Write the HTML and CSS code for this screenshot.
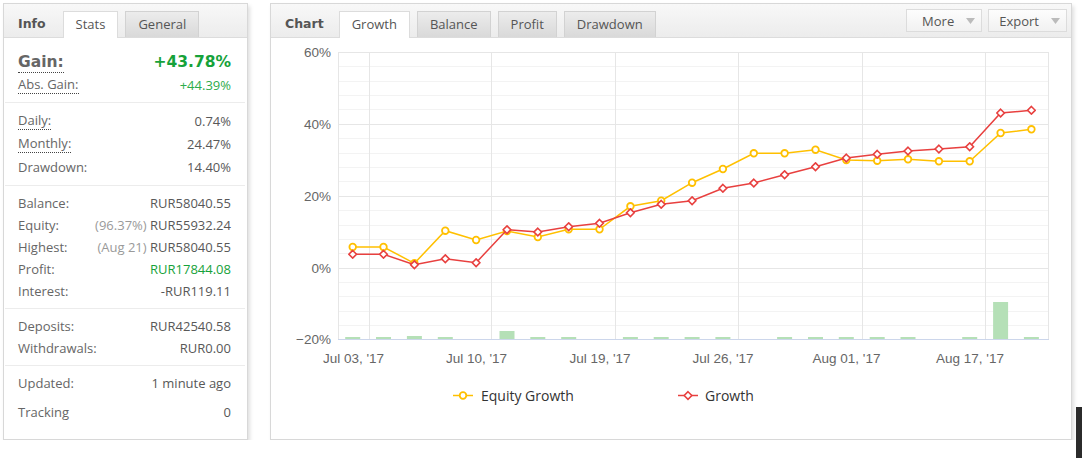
FILE: index.html
```html
<!DOCTYPE html>
<html lang="en">
<head>
  <meta charset="UTF-8">
  <title>Account stats</title>
  <link rel="stylesheet" href="styles.css">
</head>
<body>
  <div class="page">
    <!-- left: info / stats -->
    <section class="panel info">
      <div class="panel-head">
        <span class="head-title">Info</span>
        <span class="tab active">Stats</span>
        <span class="tab">General</span>
      </div>
      <div class="panel-body">
        <div class="group first">
          <div class="row gain"><span class="key dotted">Gain:</span><span class="val green">+43.78%</span></div>
          <div class="row"><span class="key dotted">Abs. Gain:</span><span class="val green-light">+44.39%</span></div>
        </div>
        <div class="group tall">
          <div class="row"><span class="key dotted">Daily:</span><span class="val">0.74%</span></div>
          <div class="row"><span class="key dotted">Monthly:</span><span class="val">24.47%</span></div>
          <div class="row"><span class="key">Drawdown:</span><span class="val">14.40%</span></div>
        </div>
        <div class="group">
          <div class="row"><span class="key">Balance:</span><span class="val">RUR58040.55</span></div>
          <div class="row"><span class="key">Equity:</span><span class="val"><span class="note">(96.37%)</span> RUR55932.24</span></div>
          <div class="row"><span class="key">Highest:</span><span class="val"><span class="note">(Aug 21)</span> RUR58040.55</span></div>
          <div class="row"><span class="key">Profit:</span><span class="val green">RUR17844.08</span></div>
          <div class="row"><span class="key">Interest:</span><span class="val">-RUR119.11</span></div>
        </div>
        <div class="group">
          <div class="row"><span class="key">Deposits:</span><span class="val">RUR42540.58</span></div>
          <div class="row"><span class="key">Withdrawals:</span><span class="val">RUR0.00</span></div>
        </div>
        <div class="group last">
          <div class="row"><span class="key">Updated:</span><span class="val">1 minute ago</span></div>
          <div class="row"><span class="key">Tracking</span><span class="val">0</span></div>
        </div>
      </div>
    </section>

    <!-- right: chart -->
    <section class="panel chart">
      <div class="panel-head">
        <span class="head-title">Chart</span>
        <span class="tab active">Growth</span>
        <span class="tab">Balance</span>
        <span class="tab">Profit</span>
        <span class="tab">Drawdown</span>
        <div class="tools">
          <button class="btn">More <svg width="9" height="6" viewBox="0 0 9 6"><path d="M0 0H9L4.5 6Z" fill="#bbb"/></svg></button>
          <button class="btn export">Export <svg width="9" height="6" viewBox="0 0 9 6"><path d="M0 0H9L4.5 6Z" fill="#bbb"/></svg></button>
        </div>
      </div>
      <div class="chart-body">
        <svg class="plot" width="800" height="401" viewBox="271 38 800 401">
          <defs>
            <marker id="dot" markerUnits="userSpaceOnUse" markerWidth="10" markerHeight="10" refX="5" refY="5">
              <circle cx="5" cy="5" r="3.3" fill="#fff" stroke="#ffc000" stroke-width="1.8"/>
            </marker>
            <marker id="dia" markerUnits="userSpaceOnUse" markerWidth="10" markerHeight="10" refX="5" refY="5">
              <path d="M5 1.2L8.8 5L5 8.8L1.2 5Z" fill="#fff" stroke="#e8403f" stroke-width="1.6"/>
            </marker>
          </defs>

          <!-- minor grid -->
          <g stroke="#f3f3f3" stroke-width="1">
            <path d="M338 66.5H1048M338 81.5H1048M338 95.5H1048M338 109.5H1048M338 138.5H1048M338 153.5H1048M338 167.5H1048M338 181.5H1048M338 210.5H1048M338 225.5H1048M338 239.5H1048M338 253.5H1048M338 282.5H1048M338 296.5H1048M338 311.5H1048M338 325.5H1048"/>
          </g>
          <!-- major grid -->
          <g stroke="#e6e6e6" stroke-width="1">
            <path d="M338 52.5H1048M338 124.5H1048M338 196.5H1048M338 268.5H1048"/>
            <path d="M338.5 52V339M369.5 52V339M491.5 52V339M615.5 52V339M738.5 52V339M862.5 52V339M985.5 52V339M1048.5 52V339"/>
          </g>
          <path d="M338 339.5H1049" stroke="#ccd6eb" stroke-width="1"/>

          <!-- bars -->
          <g fill="#b5e0b7">
            <rect x="345.2" y="337" width="15" height="2"/>
            <rect x="376" y="337" width="15" height="2"/>
            <rect x="406.9" y="336" width="15" height="3"/>
            <rect x="437.8" y="337" width="15" height="2"/>
            <rect x="499.5" y="331" width="15" height="8"/>
            <rect x="530.3" y="337" width="15" height="2"/>
            <rect x="561.2" y="337" width="15" height="2"/>
            <rect x="622.9" y="337" width="15" height="2"/>
            <rect x="653.7" y="337" width="15" height="2"/>
            <rect x="684.6" y="337" width="15" height="2"/>
            <rect x="715.4" y="337" width="15" height="2"/>
            <rect x="777.1" y="337" width="15" height="2"/>
            <rect x="808" y="337" width="15" height="2"/>
            <rect x="838.8" y="337" width="15" height="2"/>
            <rect x="869.7" y="337" width="15" height="2"/>
            <rect x="900.5" y="337" width="15" height="2"/>
            <rect x="962.2" y="337" width="15" height="2"/>
            <rect x="993.1" y="302" width="15" height="37"/>
            <rect x="1023.9" y="337" width="15" height="2"/>
          </g>

          <!-- series -->
          <polyline fill="none" stroke="#ffc000" stroke-width="1.5" marker-start="url(#dot)" marker-mid="url(#dot)" marker-end="url(#dot)"
            points="352.7,247 383.5,247 414.4,263.3 445.3,230.7 476.1,240 507,231 537.8,237 568.7,229.3 599.5,229.3 630.4,206.3 661.2,200.7 692.1,182.7 722.9,169 753.8,153.3 784.6,153.3 815.5,149.7 846.3,160 877.2,160.7 908,159.3 938.9,161.3 969.7,161.3 1000.6,133 1031.4,129.3"/>
          <polyline fill="none" stroke="#e8403f" stroke-width="1.5" marker-start="url(#dia)" marker-mid="url(#dia)" marker-end="url(#dia)"
            points="352.7,254.3 383.5,254.3 414.4,264.7 445.3,258.7 476.1,262.7 507,229.7 537.8,232 568.7,226.7 599.5,223.3 630.4,212.7 661.2,204.3 692.1,200.7 722.9,188.3 753.8,183 784.6,174.7 815.5,166.7 846.3,158 877.2,154.3 908,151 938.9,149 969.7,146.7 1000.6,113 1031.4,110.3"/>

          <!-- y axis -->
          <g class="axis" text-anchor="end">
            <text x="331" y="57">60%</text>
            <text x="331" y="129">40%</text>
            <text x="331" y="201">20%</text>
            <text x="331" y="273">0%</text>
            <text x="331" y="344">−20%</text>
          </g>
          <!-- x axis -->
          <g class="axis" text-anchor="middle">
            <text x="353.5" y="363">Jul 03, '17</text>
            <text x="476.5" y="363">Jul 10, '17</text>
            <text x="600" y="363">Jul 19, '17</text>
            <text x="723" y="363">Jul 26, '17</text>
            <text x="846.5" y="363">Aug 01, '17</text>
            <text x="970" y="363">Aug 17, '17</text>
          </g>

          <!-- legend -->
          <g class="legend">
            <path d="M453 395.5H473" stroke="#ffc000" stroke-width="1.5"/>
            <circle cx="463" cy="395.5" r="3.3" fill="#fff" stroke="#ffc000" stroke-width="1.8"/>
            <text x="481" y="400.5">Equity Growth</text>
            <path d="M678 395.5H698" stroke="#e8403f" stroke-width="1.5"/>
            <path d="M688 391.7L691.8 395.5L688 399.3L684.2 395.5Z" fill="#fff" stroke="#e8403f" stroke-width="1.6"/>
            <text x="705" y="400.5">Growth</text>
          </g>
        </svg>
      </div>
    </section>
  </div>
  <div class="side-tab"></div>
</body>
</html>
```

FILE: styles.css
```css
*{
  margin: 0;
  padding: 0;
  box-sizing: border-box;
}
body{
  background: #fff;
  font-family: "Open Sans", "Noto Sans", sans-serif;
  font-size: 13px;
  color: #5c5c5c;
}
.page{
  display: flex;
  align-items: stretch;
  gap: 22px;
  padding: 3px 0 0 3px;
}
.panel{
  background: #fff;
  border: 1px solid #d8d8d8;
  box-shadow: 2px 3px 4px rgba(0,0,0,.13);
}
.info{
  width: 245px;
}
.chart{
  width: 802px;
  display: flex;
  flex-direction: column;
}
.panel-head{
  height: 34px;
  display: flex;
  align-items: flex-end;
  padding-left: 14px;
  background: linear-gradient(#f8f8f8, #ececec);
  border-bottom: 1px solid #dcdcdc;
}
.head-title{
  font-family: "DejaVu Sans", sans-serif;
  font-weight: bold;
  font-size: 12.5px;
  color: #555;
  line-height: 26px;
  margin-right: 17px;
}
.chart .head-title{
  margin-right: 15px;
}
.tab{
  height: 26px;
  line-height: 25px;
  padding: 0 12px;
  margin-right: 7px;
  font-size: 13px;
  color: #555;
  border: 1px solid #d2d2d2;
  border-bottom: none;
  background: linear-gradient(#ececec, #d9d9d9);
}
.tab.active{
  height: 27px;
  margin-bottom: -1px;
  background: #fff;
  border-color: #dcdcdc;
}
.tools{
  margin-left: auto;
  align-self: flex-start;
  margin-top: 5px;
  margin-right: 4px;
  display: flex;
  gap: 6px;
}
.btn{
  height: 23px;
  display: flex;
  align-items: center;
  gap: 12px;
  padding: 0 6px 0 15px;
  font-family: inherit;
  font-size: 13px;
  color: #555;
  border: 1px solid #dcdcdc;
  background: linear-gradient(#fdfdfd, #f1f1f1);
}
.btn.export{
  padding-left: 10px;
}

/* stats list */
.group{
  margin: 0 2px 0 1px;
  padding: 6px 14px 6px 13px;
  border-bottom: 1px solid #ececec;
}
.group.first{
  padding-top: 12px;
}
.group.tall{
  padding-bottom: 7px;
}
.group.tall .row{
  height: 23px;
}
.group.last{
  border-bottom: none;
  padding: 2px 14px 11px 13px;
}
.group.last .row{
  height: 29px;
}
.row{
  display: flex;
  justify-content: space-between;
  align-items: center;
  height: 22px;
  white-space: nowrap;
}
.key{
  color: #666;
}
.val{
  color: #585858;
}
.note{
  color: #9a9a9a;
}
.dotted{
  border-bottom: 1px dotted #444;
  line-height: 17px;
}
.row.gain{
  height: 24px;
}
.row.gain span{
  font-family: "DejaVu Sans", sans-serif;
  font-weight: bold;
  font-size: 15.5px;
  line-height: 20px;
}
.row.gain .key{
  color: #666;
}
.green{
  color: #16a23a !important;
}
.green-light{
  color: #2eac4c;
}

/* chart */
.chart-body{
  flex: 1;
}
.plot{
  display: block;
}
.axis text{
  font-family: "Liberation Sans", Arial, sans-serif;
  font-size: 13.5px;
  fill: #666;
}
.legend text{
  font-family: "Open Sans", sans-serif;
  font-size: 14px;
  fill: #333;
}
.side-tab{
  position: fixed;
  right: 0;
  bottom: 0;
  width: 6px;
  height: 51px;
  background: #2b2b2b;
}
```
